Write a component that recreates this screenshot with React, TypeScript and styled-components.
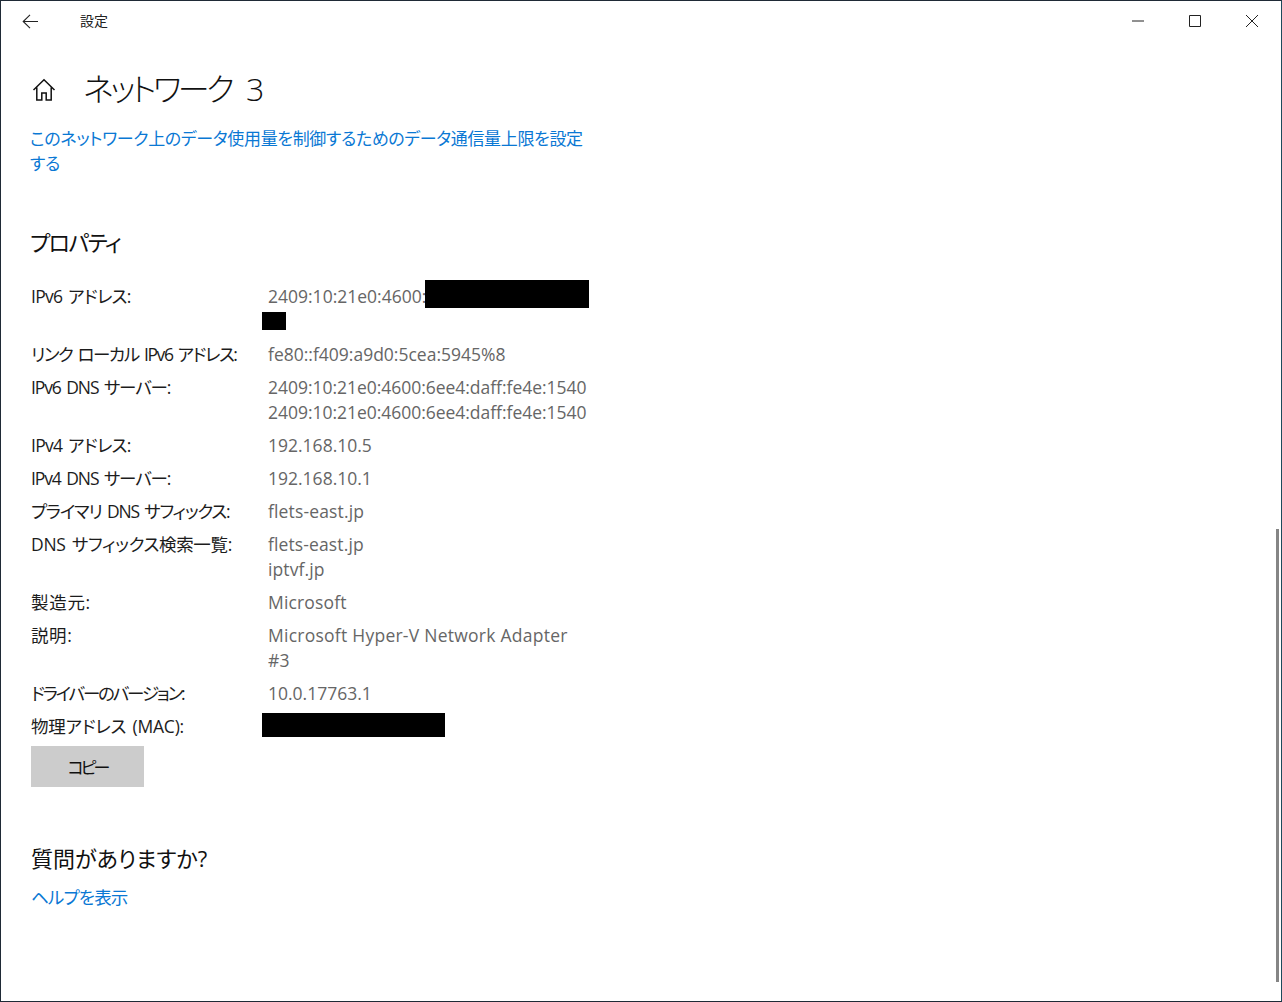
import React from "react";
import styled, { createGlobalStyle } from "styled-components";

const Global = createGlobalStyle`
  html, body { margin: 0; padding: 0; background: #fff; overflow: hidden; }
  body { font-family: "Open Sans", "Noto Sans CJK JP", sans-serif; }
`;
const font = `"Open Sans", "Noto Sans CJK JP", sans-serif`;

const Frame = styled.div`
  width: 1282px; height: 1002px; box-sizing: border-box; position: relative;
  border: 1px solid #1f2a36; border-right-color: #1d4a5c; background: #fff; overflow: hidden;
  font-family: ${font}; font-feature-settings: "palt";
`;
const TitleBar = styled.div`
  height: 40px; display: flex; align-items: center;
`;
const BackButton = styled.div`
  width: 59px; height: 40px; display: flex; align-items: center; padding-left: 21px; box-sizing: border-box;
`;
const AppName = styled.div`
  margin-left: 20px; font-size: 14px; color: #222; line-height: 40px;
`;
const WindowControls = styled.div`
  margin-left: auto; display: flex; height: 40px; margin-right: 1px;
`;
const WindowButton = styled.div`
  width: 57px; height: 40px; display: flex; align-items: center; justify-content: center;
`;
const Content = styled.div`
  padding: 0 0 0 29px; width: 590px; box-sizing: border-box;
`;
const Header = styled.div`
  display: flex; align-items: center; height: 64px; margin-top: 17px;
`;
const Home = styled.div`
  width: 54px; display: flex; align-items: center; padding-left: 2px; box-sizing: border-box;
`;
const PageTitle = styled.h1`
  margin: -2px 0 0 -1px; font-weight: 300; font-size: 32px; line-height: 64px; color: #111; white-space: nowrap;
  letter-spacing: -3.5px; word-spacing: 10px;
`;
const Link = styled.a`
  display: block; color: #0a78d4; font-size: 17.5px; line-height: 25px; white-space: nowrap;
`;
const TopLink = styled(Link)`
  margin-top: 4px; font-size: 17px; letter-spacing: -0.35px;
`;
const SectionTitle = styled.h2`
  margin: 0; font-weight: 400; font-size: 22px; line-height: 32px; color: #111;
`;
const PropertiesTitle = styled(SectionTitle)`
  margin-top: 50px; letter-spacing: -1.6px;
`;
const Properties = styled.div`
  display: flex; flex-direction: column; gap: 8px; margin-top: 26px; margin-left: 1px;
`;
const Row = styled.div`
  display: grid; grid-template-columns: 237px 1fr; font-size: 17.5px; line-height: 25px; white-space: nowrap;
`;
const Label = styled.div<{ $ls: number }>`
  color: #1c1c1c; letter-spacing: ${(p) => p.$ls}px; word-spacing: 2px;
`;
const Value = styled.div`
  color: #666; position: relative;
`;
const Line = styled.div<{ $ls: number }>`
  height: 25px; letter-spacing: ${(p) => p.$ls}px;
`;
const Redacted = styled.div<{ $w: number; $h: number; $x: number; $y: number }>`
  position: absolute; background: #000;
  width: ${(p) => p.$w}px; height: ${(p) => p.$h}px; left: ${(p) => p.$x}px; top: ${(p) => p.$y}px;
`;
const CopyButton = styled.button`
  display: block; width: 113px; height: 41px; border: 0; background: #ccc; padding: 0; margin: 7px 0 0 1px;
  font-family: ${font}; font-feature-settings: "palt"; font-size: 17px; color: #111; letter-spacing: -3px;
`;
const HelpTitle = styled(SectionTitle)`
  margin-top: 55px; margin-left: 1px;
`;
const HelpLink = styled(Link)`
  margin: 11px 0 0 1px; letter-spacing: -0.8px;
`;
const Scrollbar = styled.div`
  position: absolute; left: 1275px; top: 528px; width: 3px; height: 453px; background: #858585;
`;

const rows: { label: string; ls: number; values: string[]; vls?: number }[] = [
  { label: "IPv6 アドレス:", ls: -0.7, values: ["2409:10:21e0:4600:", ""] },
  { label: "リンク ローカル IPv6 アドレス:", ls: -1.4, values: ["fe80::f409:a9d0:5cea:5945%8"] },
  { label: "IPv6 DNS サーバー:", ls: -1.1, values: ["2409:10:21e0:4600:6ee4:daff:fe4e:1540", "2409:10:21e0:4600:6ee4:daff:fe4e:1540"], vls: -0.03 },
  { label: "IPv4 アドレス:", ls: -0.7, values: ["192.168.10.5"] },
  { label: "IPv4 DNS サーバー:", ls: -1.1, values: ["192.168.10.1"] },
  { label: "プライマリ DNS サフィックス:", ls: -1.2, values: ["flets-east.jp"], vls: 0.15 },
  { label: "DNS サフィックス検索一覧:", ls: -0.3, values: ["flets-east.jp", "iptvf.jp"], vls: 0.12 },
  { label: "製造元:", ls: 0.7, values: ["Microsoft"], vls: 0.15 },
  { label: "説明:", ls: 0.6, values: ["Microsoft Hyper-V Network Adapter", "#3"], vls: 0.25 },
  { label: "ドライバーのバージョン:", ls: -2.15, values: ["10.0.17763.1"] },
  { label: "物理アドレス (MAC):", ls: -0.2, values: [""] },
];

export default function App() {
  return (
    <Frame>
      <Global />
      <TitleBar>
        <BackButton>
          <svg width="17" height="15" viewBox="0 0 17 15" fill="none" stroke="#222" strokeWidth="1.1">
            <path d="M16 7.5H1M8 .8 1.2 7.5 8 14.2" />
          </svg>
        </BackButton>
        <AppName>設定</AppName>
        <WindowControls>
          <WindowButton>
            <svg width="12" height="2" viewBox="0 0 12 2"><path d="M0 1h12" stroke="#222" /></svg>
          </WindowButton>
          <WindowButton>
            <svg width="12" height="12" viewBox="0 0 12 12"><path d="M.5.5h11v11H.5z" fill="none" stroke="#222" /></svg>
          </WindowButton>
          <WindowButton>
            <svg width="12" height="12" viewBox="0 0 12 12"><path d="M0 0l12 12M12 0 0 12" stroke="#222" /></svg>
          </WindowButton>
        </WindowControls>
      </TitleBar>
      <Content>
        <Header>
          <Home>
            <svg width="24" height="24" viewBox="0 0 24 24" fill="none" stroke="#111" strokeWidth="1.5">
              <path d="M1.5 12 12 1.8 22.5 12M4.8 9.5V22h5v-7h4.4v7h5V9.5" />
            </svg>
          </Home>
          <PageTitle>ネットワーク 3</PageTitle>
        </Header>
        <TopLink>
          このネットワーク上のデータ使用量を制御するためのデータ通信量上限を設定
          <br />
          する
        </TopLink>
        <PropertiesTitle>プロパティ</PropertiesTitle>
        <Properties>
          {rows.map((r, i) => (
            <Row key={i}>
              <Label $ls={r.ls}>{r.label}</Label>
              <Value>
                {r.values.map((v, j) => (
                  <Line key={j} $ls={r.vls ?? 0}>{v}</Line>
                ))}
                {i === 0 && (
                  <>
                    <Redacted $w={164} $h={28} $x={157} $y={-4} />
                    <Redacted $w={24} $h={18} $x={-6} $y={28} />
                  </>
                )}
                {i === 10 && <Redacted $w={183} $h={24} $x={-6} $y={-1} />}
              </Value>
            </Row>
          ))}
        </Properties>
        <CopyButton>コピー</CopyButton>
        <HelpTitle>質問がありますか?</HelpTitle>
        <HelpLink>ヘルプを表示</HelpLink>
      </Content>
      <Scrollbar />
    </Frame>
  );
}
